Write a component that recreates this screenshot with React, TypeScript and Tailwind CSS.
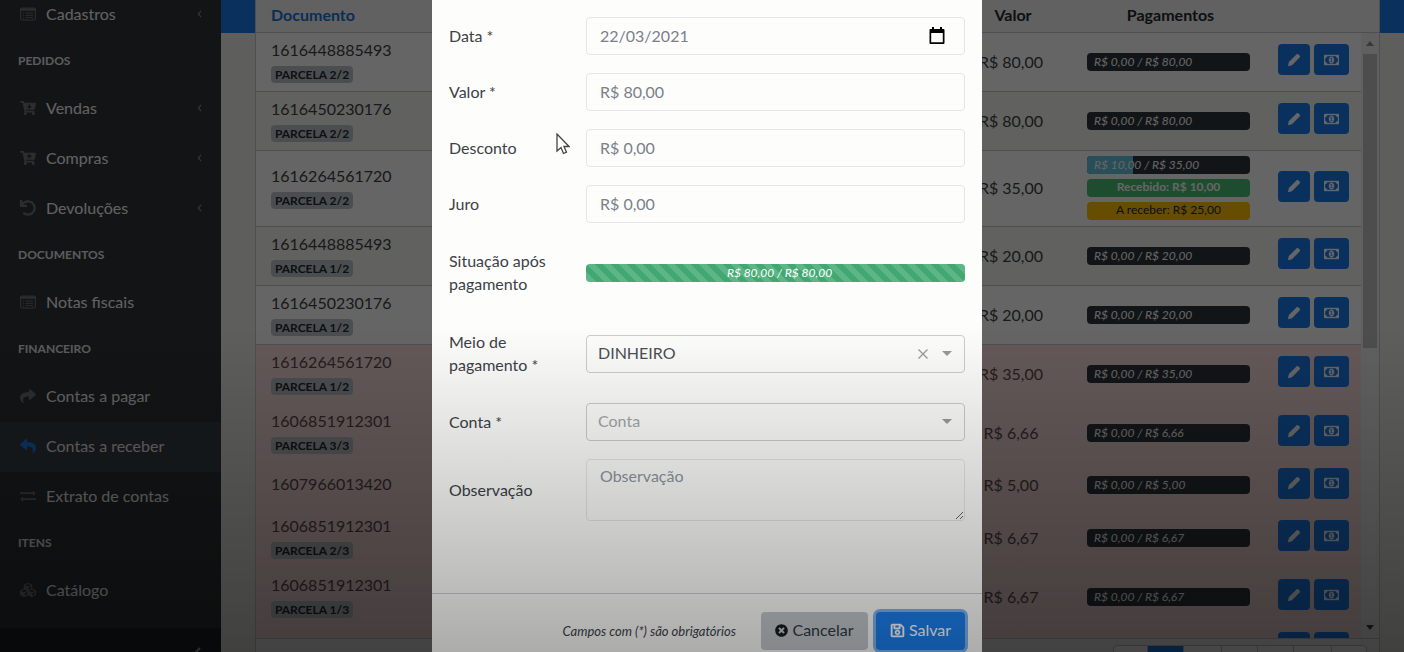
import { Fragment, useState } from "react";
import type { ComponentType, ReactNode } from "react";
import {
  FaCartArrowDown,
  FaCartPlus,
  FaCubes,
  FaRegSave,
  FaReply,
  FaShare,
  FaTimesCircle,
  FaUndo,
} from "react-icons/fa";

type IconType = ComponentType<{ className?: string }>;

const ListIcon = ({ className }: { className?: string }) => (
  <svg viewBox="0 0 16 16" fill="none" stroke="currentColor" className={className}>
    <rect x=".6" y="2" width="14.800" height="12" rx="1" />
    <path d="M.6 3.500h14.800" strokeWidth="2.400" />
    <path d="M2.800 7h1.200M5.500 7h7.800M2.800 9.300h1.200M5.500 9.300h7.800M2.800 11.600h1.200M5.500 11.600h7.800" />
  </svg>
);

const ExchangeIcon = ({ className }: { className?: string }) => (
  <svg viewBox="0 0 16 16" fill="currentColor" className={className}>
    <path d="M0 4.300h13V2.600L15.800 5.200 13 7.800V6.100H0zM16 10.200H3V8.500L.2 11.100 3 13.700V12h13z" />
  </svg>
);

const PencilIcon = () => (
  <svg viewBox="0 0 12 12" fill="currentColor" className="size-3.5">
    <path d="M8.100 1.200c.5-.5 1.200-.5 1.700 0l1 1c.5.5.5 1.200 0 1.700L4.200 10.500l-3.400.8.800-3.500z" />
  </svg>
);

const MoneyIcon = () => (
  <svg viewBox="0 128 1920 1536" fill="currentColor" className="h-3 w-[15px]">
    <path d="M768 1152h384v-96h-128v-448h-114l-148 137 77 80q42-37 55-57h2v288h-128v96zm512-256q0 70-21 142t-59.5 134-101.5 101-138 39-138-39-101.5-101-59.5-134-21-142 21-142 59.5-134 101.5-101 138-39 138 39 101.5 101 59.5 134 21 142zm512 256v-512q-106 0-181-75t-75-181h-1152q0 106-75 181t-181 75v512q106 0 181 75t75 181h1152q0-106 75-181t181-75zm128-832v1152q0 26-19 45t-45 19h-1792q-26 0-45-19t-19-45v-1152q0-26 19-45t45-19h1792q26 0 45 19t19 45z" stroke="currentColor" strokeWidth="50" />
  </svg>
);

const CalendarIcon = () => (
  <svg viewBox="0 0 16 18" fill="currentColor" className="h-[18px] w-4">
    <path d="M3 0h2v2h6V0h2v2h1.2c.8 0 1.3.5 1.3 1.3v12.4c0 .8-.5 1.3-1.3 1.3H1.8C1 17 .5 16.500.5 15.700V3.300C.5 2.500 1 2 1.800 2H3zM2.200 6v9.300h11.600V6z" />
  </svg>
);

interface MenuItem {
  label: string;
  icon: IconType;
  expandable?: boolean;
  active?: boolean;
}

const menu: { title?: string; items: MenuItem[] }[] = [
  { items: [{ label: "Cadastros", icon: ListIcon, expandable: true }] },
  {
    title: "PEDIDOS",
    items: [
      { label: "Vendas", icon: FaCartArrowDown, expandable: true },
      { label: "Compras", icon: FaCartPlus, expandable: true },
      { label: "Devoluções", icon: FaUndo, expandable: true },
    ],
  },
  { title: "DOCUMENTOS", items: [{ label: "Notas fiscais", icon: ListIcon }] },
  {
    title: "FINANCEIRO",
    items: [
      { label: "Contas a pagar", icon: FaShare },
      { label: "Contas a receber", icon: FaReply, active: true },
      { label: "Extrato de contas", icon: ExchangeIcon },
    ],
  },
  { title: "ITENS", items: [{ label: "Catálogo", icon: FaCubes }] },
];

interface Conta {
  documento: string;
  parcela?: string;
  valor: string;
  recebido?: string;
  restante?: string;
  percent?: number;
  vencida?: boolean;
}

const contas: Conta[] = [
  { documento: "1616448885493", parcela: "2/2", valor: "80,00" },
  { documento: "1616450230176", parcela: "2/2", valor: "80,00" },
  { documento: "1616264561720", parcela: "2/2", valor: "35,00", recebido: "10,00", restante: "25,00", percent: 28.5 },
  { documento: "1616448885493", parcela: "1/2", valor: "20,00" },
  { documento: "1616450230176", parcela: "1/2", valor: "20,00" },
  { documento: "1616264561720", parcela: "1/2", valor: "35,00", vencida: true },
  { documento: "1606851912301", parcela: "3/3", valor: "6,66", vencida: true },
  { documento: "1607966013420", valor: "5,00", vencida: true },
  { documento: "1606851912301", parcela: "2/3", valor: "6,67", vencida: true },
  { documento: "1606851912301", parcela: "1/3", valor: "6,67", vencida: true },
];

const Sidebar = () => (
  <aside className="flex w-[221px] shrink-0 flex-col overflow-hidden bg-[#2f3436] text-[#f4f4f4]">
    <nav className="-mt-2.5">
      {menu.map((group, i) => (
        <Fragment key={i}>
          {group.title && (
            <h2 className="flex h-11 items-center px-[18px] pb-0.5 text-xs font-bold text-[#e4e5e6]">{group.title}</h2>
          )}
          {group.items.map(({ label, icon: Icon, expandable, active }) => (
            <a
              key={label}
              href="#"
              className={`flex h-[50px] items-center gap-2.5 pr-[19px] pb-0.5 pl-5 text-base ${active ? "bg-[#384247]" : ""}`}
            >
              <Icon className={`size-4 ${active ? "text-[#1b7fee]" : "text-[#6c7174]"}`} />
              <span className="flex-1">{label}</span>
              {expandable && (
                <svg viewBox="0 0 6 10" fill="none" stroke="#7f868b" strokeWidth="1.5" className="h-2 w-[5px]">
                  <path d="M5 1 1.500 5 5 9" />
                </svg>
              )}
            </a>
          ))}
        </Fragment>
      ))}
    </nav>
    <div className="mt-3 flex flex-1 justify-end bg-[#1d2125] pt-4 pr-5">
      <svg viewBox="0 0 8 12" fill="none" stroke="#a0a5aa" strokeWidth="2" className="h-3 w-2">
        <path d="M7 4 2 9l5 5" />
      </svg>
    </div>
  </aside>
);

const Pagamento = ({ conta }: { conta: Conta }) => (
  <div className="flex flex-col gap-[5px]">
    <div className="relative h-[18px] overflow-hidden rounded bg-[#2f353a]">
      <div className="h-full bg-[#63c2de]" style={{ width: `${conta.percent ?? 0}%` }} />
      <span className="absolute inset-0 px-[7px] text-xs leading-[18px] text-white italic">
        R$ {conta.recebido ?? "0,00"} / R$ {conta.valor}
      </span>
    </div>
    {conta.recebido && (
      <>
        <div className="h-[18px] rounded bg-[#4dbd74] text-center text-xs leading-4 font-bold text-white">
          Recebido: R$ {conta.recebido}
        </div>
        <div className="h-[18px] rounded bg-[#ffc107] text-center text-xs leading-4 text-[#23282c]">
          A receber: R$ {conta.restante}
        </div>
      </>
    )}
  </div>
);

const Acoes = () => (
  <div className="flex gap-1 pl-[7px]">
    <button type="button" aria-label="Editar" className="flex h-[31px] w-8 items-center justify-center rounded bg-[#1a7cec] text-white">
      <PencilIcon />
    </button>
    <button type="button" aria-label="Receber" className="flex h-[31px] w-[35px] items-center justify-center rounded bg-[#1a7cec] text-white">
      <MoneyIcon />
    </button>
  </div>
);

const rowHeight = (conta: Conta) => {
  if (conta.recebido) return "h-[76px]";
  return conta.parcela ? "h-[59px]" : "h-[46px]";
};

const ContasTable = () => (
  <div className="flex min-h-0 flex-1 overflow-hidden">
    <table className="w-full flex-1 table-fixed self-start text-[#3c3f42]">
      <thead>
        <tr className="h-8 border-b border-[#c4c6c8] bg-[#f1f2f1] text-base text-[#23282c]">
          <th className="px-[15px] pb-0.5 text-left font-bold text-[#1a72d4]">Documento</th>
          <th className="w-[106px] pb-0.5 font-bold">Valor</th>
          <th className="w-[205px] pb-0.5 pl-1 font-bold">Pagamentos</th>
          <th className="w-[90px]" aria-label="Ações" />
        </tr>
      </thead>
      <tbody>
        {contas.map((conta, i) => (
          <tr
            key={i}
            className={`${rowHeight(conta)} ${
              conta.vencida ? "bg-[#fbdedb] text-[#5c4a4b]" : "border-b border-[#c4c6c8] odd:bg-[#fdfdfc] even:bg-[#f2f2f0]"
            }`}
          >
            <td className="px-[15px] pb-[3px]">
              <div className="leading-6">{conta.documento}</div>
              {conta.parcela && (
                <span className="mt-1 block w-[82px] rounded bg-[#bcc2c8] text-center text-xs leading-[17px] font-bold text-[#23282c]">
                  PARCELA {conta.parcela}
                </span>
              )}
            </td>
            <td className="pr-1 text-center">R$ {conta.valor}</td>
            <td className="px-[21px]">
              <Pagamento conta={conta} />
            </td>
            <td className="pb-1">
              <Acoes />
            </td>
          </tr>
        ))}
        <tr className="h-[46px] bg-[#fbdedb]">
          <td colSpan={3} />
          <td className="pb-1">
            <Acoes />
          </td>
        </tr>
      </tbody>
    </table>
    <div className="flex w-[18px] flex-col items-center bg-[#f1f1f1]">
      <div className="h-[33px] w-full border-b border-[#c4c6c8] bg-[#f1f2f1]" />
      <svg viewBox="0 0 8 5" fill="#8c8c8c" className="my-2 h-[5px] w-2 shrink-0">
        <path d="M0 5 4 0l4 5z" />
      </svg>
      <div className="h-[294px] w-3.5 shrink-0 bg-[#c1c1c1]" />
      <svg viewBox="0 0 8 5" fill="#404040" className="mt-auto mb-2 h-[5px] w-2 shrink-0">
        <path d="M0 0l4 5 4-5z" />
      </svg>
    </div>
  </div>
);

const Pagination = () => (
  <div className="flex h-3.5 shrink-0 justify-end overflow-hidden border-t border-[#c4c6c8] bg-[#f1f2f1] pt-1.5 pr-3">
    <div className="flex h-9 divide-x divide-[#c4c6c8] rounded border border-[#c4c6c8] bg-white">
      <span className="w-[34px]" />
      <span className="w-9 bg-[#1a7cec]" />
      <span className="w-[38px]" />
      <span className="w-9" />
      <span className="w-9" />
      <span className="w-[38px]" />
      <span className="w-[34px]" />
    </div>
  </div>
);

const inputClass =
  "w-full rounded border border-[#e4e7ea] bg-transparent px-[13px] text-base text-[#7a8088] placeholder:text-[#8f959c] outline-none";

const Field = ({ id, label, tall, children }: { id: string; label: string; tall?: boolean; children: ReactNode }) => (
  <div className={`flex items-center ${tall ? "min-h-[63px]" : ""}`}>
    <label htmlFor={id} className="w-[137px] shrink-0 pr-7 pb-0.5 text-base leading-[23px] text-[#3c4146]">
      {label}
    </label>
    <div className="relative flex flex-1">{children}</div>
  </div>
);

const Caret = () => (
  <svg viewBox="0 0 10 5" fill="#999" className="pointer-events-none absolute top-4 right-[13px] h-[5px] w-2.5">
    <path d="M0 0h10L5 5z" />
  </svg>
);

const PaymentModal = () => {
  const [data, setData] = useState("22/03/2021");
  const [valor, setValor] = useState("R$ 80,00");
  const [desconto, setDesconto] = useState("R$ 0,00");
  const [juro, setJuro] = useState("R$ 0,00");
  const [meio, setMeio] = useState("DINHEIRO");

  return (
    <div role="dialog" aria-modal="true" className="flex w-[550px] flex-col bg-[#fdfdfc]">
      <form className="flex flex-1 flex-col">
        <div className="flex flex-1 flex-col gap-[18px] px-[17px] pt-[17px]">
          <Field id="data" label="Data *">
            <input id="data" className={`${inputClass} h-[38px] pb-0.5`} value={data} onChange={(e) => setData(e.target.value)} />
            <button type="button" aria-label="Abrir calendário" className="absolute top-2.5 right-5 text-black">
              <CalendarIcon />
            </button>
          </Field>
          <Field id="valor" label="Valor *">
            <input id="valor" className={`${inputClass} h-[38px] pb-0.5`} value={valor} onChange={(e) => setValor(e.target.value)} />
          </Field>
          <Field id="desconto" label="Desconto">
            <input id="desconto" className={`${inputClass} h-[38px] pb-0.5`} value={desconto} onChange={(e) => setDesconto(e.target.value)} />
          </Field>
          <Field id="juro" label="Juro">
            <input id="juro" className={`${inputClass} h-[38px] pb-0.5`} value={juro} onChange={(e) => setJuro(e.target.value)} />
          </Field>
          <Field id="situacao" label="Situação após pagamento" tall>
            <output
              id="situacao"
              className="h-[18px] w-full rounded bg-[#42a872] bg-[linear-gradient(45deg,rgba(255,255,255,.15)_25%,transparent_25%,transparent_50%,rgba(255,255,255,.15)_50%,rgba(255,255,255,.15)_75%,transparent_75%,transparent)] bg-[length:16px_16px] pl-2 text-center text-xs leading-[18px] text-white italic"
            >
              R$ 80,00 / R$ 80,00
            </output>
          </Field>
          <Field id="meio" label="Meio de pagamento *" tall>
            <select
              id="meio"
              value={meio}
              onChange={(e) => setMeio(e.target.value)}
              className="h-[38px] w-full appearance-none rounded border border-[#ccc] bg-transparent px-[11px] pb-0.5 text-base text-[#4a4f55]"
            >
              <option value="">Meio de pagamento</option>
              <option>DINHEIRO</option>
            </select>
            <button type="button" aria-label="Limpar" onClick={() => setMeio("")} className="absolute top-3.5 right-[37px]">
              <svg viewBox="0 0 10 10" stroke="#999" strokeWidth="1.300" className="size-2.5">
                <path d="M.5.5l9 9M9.500.5l-9 9" />
              </svg>
            </button>
            <Caret />
          </Field>
          <Field id="conta" label="Conta *">
            <select
              id="conta"
              className="h-[38px] w-full appearance-none rounded border border-[#ccc] bg-transparent px-[11px] pb-0.5 text-base text-[#a3a6a9]"
            >
              <option>Conta</option>
            </select>
            <Caret />
          </Field>
          <Field id="observacao" label="Observação">
            <textarea id="observacao" placeholder="Observação" className={`${inputClass} h-[62px] py-1 leading-6`} />
          </Field>
        </div>
        <div className="flex h-[59px] items-start justify-end border-t border-[#c8ced3] px-[17px] pt-[18px]">
          <small className="mr-[25px] text-[13px] leading-[38px] text-[#3c4146] italic">
            Campos com (*) são obrigatórios
          </small>
          <button type="button" className="mr-2 flex h-[38px] w-[107px] shrink-0 items-center justify-center gap-1 rounded bg-[#c2c8cd] pb-0.5 text-base text-[#33383d]">
            <FaTimesCircle className="size-[13px] text-[#181b1e]" />
            Cancelar
          </button>
          <button type="submit" className="flex h-[38px] w-[89px] shrink-0 items-center justify-center gap-1 rounded bg-[#1b7fee] pb-0.5 text-base text-white ring-3 ring-[#7fb5f0]">
            <FaRegSave className="size-[15px]" stroke="currentColor" strokeWidth="16" />
            Salvar
          </button>
        </div>
      </form>
    </div>
  );
};

export default function App() {
  return (
    <div className="relative flex h-screen overflow-hidden font-['Lato',sans-serif]">
      <Sidebar />
      <main className="flex min-w-0 flex-1 bg-[#ebebe8] bg-[linear-gradient(#1a7cec_33px,transparent_33px)] pr-6 pl-[34px]">
        <section className="flex min-w-0 flex-1 flex-col border-x border-[#c4c6c8] bg-white">
          <ContasTable />
          <Pagination />
        </section>
      </main>

      <div className="absolute inset-0 flex justify-center bg-black/60 pl-2.5">
        <PaymentModal />
      </div>

      <svg viewBox="0 0 14 22" fill="#fff" stroke="#444" strokeWidth="1.300" className="absolute top-[133px] left-[556px] h-[22px] w-3.5">
        <path d="M1 1v17l4-3.500L7.500 20.500l3-1.300L8 13.500h5z" />
      </svg>

      {/* bottom shade */}
      <div className="pointer-events-none absolute inset-x-0 bottom-0 h-1/2 bg-linear-to-b from-transparent to-black/32" />
    </div>
  );
}
